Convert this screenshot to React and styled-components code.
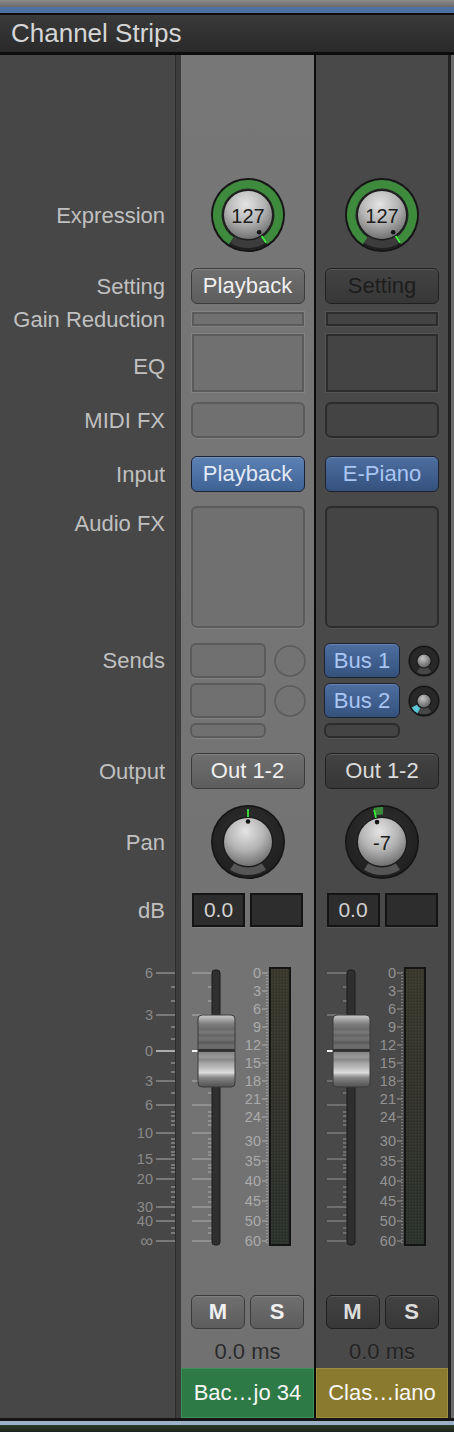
import React from 'react';
import styled, { createGlobalStyle, ThemeProvider } from 'styled-components';

const GlobalStyle = createGlobalStyle`
  html, body {
    margin: 0;
    padding: 0;
    background: #474747;
  }
  body {
    font-family: "Liberation Sans", Arial, sans-serif;
    overflow: hidden;
  }
`;

const LIGHT = {
  bg: 'linear-gradient(#777777, #717171)',
  slotFill: '#707070',
  slotBorder: '#5b5b5b',
  slotHi: '#838383',
  btnTop: '#6f6f6f',
  btnBot: '#5d5d5d',
  btnBorder: '#3b3b3b',
  btnText: '#f0f0f0',
  tick: '#9b9b9b',
  scaleText: '#ababab',
  latency: '#2a2a2a',
};

const DARK = {
  bg: '#494949',
  slotFill: '#444444',
  slotBorder: '#2c2c2c',
  slotHi: '#545454',
  btnTop: '#434343',
  btnBot: '#373737',
  btnBorder: '#202020',
  btnText: '#dcdcdc',
  tick: '#7c7c7c',
  scaleText: '#939393',
  latency: '#232323',
};

const ROWS = [
  { k: 'pad', h: 122 },
  { k: 'expr', h: 76, label: 'Expression' },
  { k: 'gap', h: 13 },
  { k: 'setting', h: 40, label: 'Setting' },
  { k: 'gain', h: 26, label: 'Gain Reduction' },
  { k: 'eq', h: 62, label: 'EQ', shift: 6 },
  { k: 'midi', h: 52, label: 'MIDI FX' },
  { k: 'input', h: 56, label: 'Input' },
  { k: 'audio', h: 130, label: 'Audio FX', top: 9 },
  { k: 'sends', h: 110, label: 'Sends', top: 16 },
  { k: 'output', h: 58, label: 'Output' },
  { k: 'pan', h: 84, label: 'Pan' },
  { k: 'db', h: 52, label: 'dB' },
  { k: 'fader', h: 348 },
  { k: 'ms', h: 56 },
  { k: 'lat', h: 28 },
  { k: 'name', h: 50 },
];

const FADER_MARKS = [['6', 37], ['3', 79], ['0', 115], ['3', 145], ['6', 169], ['10', 197], ['15', 223], ['20', 243], ['30', 271], ['40', 285], ['∞', 305]];
const FADER_MINOR = [51, 65, 91, 103, 127, 136, 157, 176, 180, 185, 189, 203, 207, 211, 216, 219, 229, 232, 236, 251, 256, 261, 266, 279, 292, 297];
const METER_MARKS = [['0', 37], ['3', 55], ['6', 73], ['9', 91], ['12', 109], ['15', 127], ['18', 145], ['21', 163], ['24', 181], ['30', 205], ['35', 225], ['40', 245], ['45', 265], ['50', 285], ['60', 305]];

const CAP_STOPS = [
  [0, '#cccccc'], [0.04, '#b4b4b4'], [0.1, '#8c8c8c'], [0.14, '#787878'], [0.2, '#6a6a6a'],
  [0.24, '#7a7a7a'], [0.28, '#646464'], [0.33, '#747474'], [0.38, '#5c5c5c'], [0.43, '#6f6f6f'],
  [0.47, '#686868'], [0.48, '#2e2e2e'], [0.505, '#2e2e2e'], [0.52, '#868686'], [0.58, '#989898'],
  [0.62, '#888888'], [0.67, '#a6a6a6'], [0.72, '#b6b6b6'], [0.76, '#c9c9c9'], [0.8, '#dcdcdc'],
  [0.83, '#b4b4b4'], [0.87, '#868686'], [0.94, '#686868'], [1, '#545454'],
];

const CHANNELS = [
  {
    id: 'a',
    tone: LIGHT,
    width: 133,
    setting: 'Playback',
    settingDim: false,
    input: 'Playback',
    inputBright: true,
    sends: null,
    pan: 0,
    panText: '',
    name: 'Bac…jo 34',
    nameBg: '#2e7a46',
    nameBorder: '#3d9058',
  },
  {
    id: 'b',
    tone: DARK,
    width: 132,
    setting: 'Setting',
    settingDim: true,
    input: 'E-Piano',
    inputBright: false,
    sends: [{ name: 'Bus 1', level: false }, { name: 'Bus 2', level: true }],
    pan: -14,
    panText: '-7',
    name: 'Clas…iano',
    nameBg: '#8a7a2d',
    nameBorder: '#9d8c3b',
  },
];

const polar = (cx, cy, r, a) => {
  const t = (a * Math.PI) / 180;
  return [cx + r * Math.sin(t), cy - r * Math.cos(t)];
};

const sector = (cx, cy, r1, r2, a1, a2) => {
  const [x1, y1] = polar(cx, cy, r2, a1);
  const [x2, y2] = polar(cx, cy, r2, a2);
  const [x3, y3] = polar(cx, cy, r1, a2);
  const [x4, y4] = polar(cx, cy, r1, a1);
  const large = a2 - a1 > 180 ? 1 : 0;
  return `M${x1} ${y1}A${r2} ${r2} 0 ${large} 1 ${x2} ${y2}L${x3} ${y3}A${r1} ${r1} 0 ${large} 0 ${x4} ${y4}Z`;
};

/* ---------- layout ---------- */

const Page = styled.div`
  width: 454px;
  height: 1432px;
  display: flex;
  flex-direction: column;
  background: #474747;
`;

const TopBar = styled.div`
  height: 7px;
  background: linear-gradient(#8c8c8c, #6a6a6a);
`;

const BlueLine = styled.div`
  height: 6px;
  background: #4d71a2;
  border-bottom: 2px solid #0e0e0e;
`;

const Header = styled.div`
  height: 37px;
  display: flex;
  align-items: center;
  padding-left: 11px;
  background: linear-gradient(#3a3a3a, #2a2a2a);
  border-bottom: 3px solid #0c0c0c;
  color: #d6d6d6;
  font-size: 26px;
`;

const Body = styled.div`
  flex: 1;
  display: flex;
`;

const LabelColumn = styled.div`
  width: 175px;
  display: flex;
  flex-direction: column;
  background: #474747;
`;

const SideDivider = styled.div`
  width: 6px;
  background: linear-gradient(90deg, #2c2c2c 0 1px, #3d3d3d 1px);
`;

const StripDivider = styled.div`
  width: 2px;
  background: #0b0b0b;
`;

const RightEdge = styled.div`
  width: 6px;
  background: linear-gradient(90deg, #232323 0 3px, #6b6b6b 3px);
`;

const Footer = styled.div`
  height: 14px;
  background: linear-gradient(#161616 0 3px, #9db1c6 3px 7px, #2c3a29 7px, #1c2619);
`;

const StripColumn = styled.div`
  width: ${({ $w }) => $w}px;
  display: flex;
  flex-direction: column;
  background: ${({ theme }) => theme.bg};
`;

const Row = styled.div`
  height: ${({ $h }) => $h}px;
  flex-shrink: 0;
  display: flex;
  justify-content: center;
  align-items: ${({ $top }) => ($top ? 'flex-start' : 'center')};
`;

const LabelRow = styled(Row)`
  justify-content: flex-end;
  padding-right: 10px;
`;

const Label = styled.div`
  font-size: 22px;
  line-height: 25px;
  color: #c0c0c0;
  white-space: nowrap;
  margin-top: ${({ $top }) => $top || 0}px;
`;

const ScaleRow = styled(Row)`
  justify-content: flex-start;
  align-items: flex-start;
`;

/* ---------- strip parts ---------- */

const Button = styled.div`
  width: 114px;
  height: 36px;
  box-sizing: border-box;
  border-radius: 6px;
  border: 1.5px solid ${({ theme }) => theme.btnBorder};
  background: linear-gradient(${({ theme }) => theme.btnTop}, ${({ theme }) => theme.btnBot});
  box-shadow: inset 0 1px 0 rgba(255, 255, 255, 0.12);
  display: flex;
  align-items: center;
  justify-content: center;
  font-size: 22px;
  color: ${({ theme, $dim }) => ($dim ? '#1d1d1d' : theme.btnText)};
`;

const BlueButton = styled.div`
  width: ${({ $w }) => $w || 114}px;
  height: ${({ $h }) => $h || 36}px;
  box-sizing: border-box;
  border-radius: 6px;
  border: 1.5px solid #1c2230;
  background: ${({ $bright }) =>
    $bright ? 'linear-gradient(#5c81b4, #3f6294)' : 'linear-gradient(#4d6ea0, #35527e)'};
  box-shadow: inset 0 1px 0 rgba(255, 255, 255, 0.15);
  display: flex;
  align-items: center;
  justify-content: center;
  font-size: 22px;
  color: ${({ $bright }) => ($bright ? '#e2e9f6' : '#a9c5f4')};
`;

const Slot = styled.div`
  width: ${({ $w }) => $w || 114}px;
  height: ${({ $h }) => $h}px;
  box-sizing: border-box;
  border-radius: 6px;
  border: 2px solid ${({ theme }) => theme.slotBorder};
  background: ${({ theme }) => theme.slotFill};
  box-shadow: 0 1px 0 ${({ theme }) => theme.slotHi};
`;

const SquareBox = styled.div`
  width: 112px;
  height: ${({ $h }) => $h}px;
  box-sizing: border-box;
  border: 2px solid ${({ theme }) => theme.slotBorder};
  background: ${({ theme }) => theme.slotFill};
  box-shadow: 0 0 0 1px ${({ theme }) => theme.slotHi};
`;

const Sends = styled.div`
  width: 116px;
  padding-top: 11px;
  display: flex;
  flex-direction: column;
  gap: 5px;
`;

const SendLine = styled.div`
  display: flex;
  align-items: center;
  justify-content: space-between;
`;

const DbPair = styled.div`
  display: flex;
  gap: 5px;
`;

const DbBox = styled.div`
  width: 53px;
  height: 34px;
  box-sizing: border-box;
  border: 2px solid #141414;
  background: #2d2d2d;
  box-shadow: 0 1px 0 rgba(255, 255, 255, 0.08);
  display: flex;
  align-items: center;
  justify-content: center;
  font-size: 21px;
  color: #d2d2d2;
`;

const MsPair = styled.div`
  display: flex;
  gap: 5px;
`;

const MsButton = styled(Button)`
  width: 54px;
  height: 34px;
  font-weight: bold;
  font-size: 22px;
`;

const Latency = styled.div`
  font-size: 22px;
  margin-top: -4px;
  color: ${({ theme }) => theme.latency};
  text-shadow: 0 1px 0 rgba(255, 255, 255, 0.1);
`;

const NameTag = styled.div`
  flex: 1;
  align-self: stretch;
  box-sizing: border-box;
  border: 1px solid ${({ $border }) => $border};
  background: ${({ $bg }) => $bg};
  display: flex;
  align-items: center;
  justify-content: center;
  font-size: 22px;
  color: #f6f6f6;
`;

/* ---------- drawings ---------- */

function Knob({ id, kind, angle, text }) {
  const c = 38;
  const [tx1, ty1] = polar(c, c, 25, angle);
  const [tx2, ty2] = polar(c, c, 33, angle);
  const [dx, dy] = polar(c, c, 20.5, angle);
  return (
    <svg width="76" height="76" viewBox="0 0 76 76">
      <defs>
        <radialGradient id={`${id}-cap`} cx="45%" cy="28%" r="78%">
          <stop offset="0" stopColor="#e4e4e4" />
          <stop offset="0.5" stopColor="#b4b4b4" />
          <stop offset="1" stopColor="#666666" />
        </radialGradient>
        <radialGradient id={`${id}-ring`} cx="50%" cy="40%" r="60%">
          <stop offset="0" stopColor="#333333" />
          <stop offset="1" stopColor="#1f1f1f" />
        </radialGradient>
      </defs>
      <circle cx={c} cy={c} r="37" fill="#141414" />
      <circle cx={c} cy={c} r="35.5" fill={`url(#${id}-ring)`} />
      <path d={sector(c, c, 24, 33, 147, 213)} fill={kind === 'expr' ? '#3c3c3c' : '#565656'} />
      {kind === 'expr' && <path d={sector(c, c, 26.5, 35, -147, 147)} fill="#3e8b3e" />}
      {kind === 'pan' && angle !== 0 && (
        <path d={sector(c, c, 27.5, 35, angle, 2)} fill="#3b8a3b" />
      )}
      <circle cx={c} cy={c} r="25.5" fill="#1c1c1c" />
      <circle cx={c} cy={c} r="24" fill={`url(#${id}-cap)`} />
      <line x1={tx1} y1={ty1} x2={tx2} y2={ty2} stroke="#3cff3c" strokeWidth="1.6" />
      <circle cx={dx} cy={dy} r="2.3" fill="#141414" />
      {text && (
        <text
          x={c}
          y={c + 1}
          textAnchor="middle"
          dominantBaseline="central"
          fontFamily="Liberation Sans, Arial, sans-serif"
          fontSize="20"
          fill="#1c1c1c"
        >
          {text}
        </text>
      )}
    </svg>
  );
}

function SendKnob({ id, level }) {
  const c = 16;
  return (
    <svg width="32" height="32" viewBox="0 0 32 32">
      <defs>
        <radialGradient id={`${id}-ball`} cx="40%" cy="30%" r="75%">
          <stop offset="0" stopColor="#c4c4c4" />
          <stop offset="1" stopColor="#5e5e5e" />
        </radialGradient>
      </defs>
      <circle cx={c} cy={c} r="15.5" fill="#151515" />
      <circle cx={c} cy={c} r="14" fill="#282828" />
      <path d={sector(c, c, 6, 13, 147, 213)} fill="#474747" />
      {level && <path d={sector(c, c, 8, 14, -152, -118)} fill="#5ac8d8" />}
      <circle cx={c} cy={c} r="7.5" fill="#1a1a1a" />
      <circle cx={c} cy={c} r="6.5" fill={`url(#${id}-ball)`} />
    </svg>
  );
}

function EmptySend() {
  return (
    <svg width="32" height="32" viewBox="0 0 32 32">
      <circle cx="16" cy="16" r="15" fill="#737373" stroke="#5c5c5c" strokeWidth="1.6" />
    </svg>
  );
}

function FaderLegend() {
  const col = '#8a8a8a';
  return (
    <svg width="175" height="348" viewBox="0 0 175 348">
      {FADER_MARKS.map(([n, y], i) => (
        <g key={i}>
          <text
            x="153"
            y={y}
            textAnchor="end"
            dominantBaseline="central"
            fontFamily="Liberation Sans, Arial, sans-serif"
            fontSize={n === '∞' ? 18 : 14.5}
            fill={col}
          >
            {n}
          </text>
          <line x1="156" x2="175" y1={y} y2={y} stroke={n === '0' && i === 2 ? '#cfcfcf' : col} strokeWidth="1.5" />
        </g>
      ))}
      {FADER_MINOR.map((y) => (
        <line key={y} x1="171" x2="175" y1={y} y2={y} stroke={col} strokeWidth="1.5" />
      ))}
    </svg>
  );
}

function Fader({ id, width, t }) {
  const dots = [];
  for (let y = 36; y <= 306; y += 3) dots.push(y);
  return (
    <svg width={width} height="348" viewBox={`0 0 ${width} 348`}>
      <defs>
        <linearGradient id={`${id}-cap`} x1="0" y1="0" x2="0" y2="1">
          {CAP_STOPS.map(([o, c]) => (
            <stop key={o} offset={o} stopColor={c} />
          ))}
        </linearGradient>
        <linearGradient id={`${id}-meter`} x1="0" y1="0" x2="0" y2="1">
          <stop offset="0" stopColor="#38372a" />
          <stop offset="0.45" stopColor="#313129" />
          <stop offset="1" stopColor="#2a302b" />
        </linearGradient>
        <pattern id={`${id}-dots`} width="3" height="3" patternUnits="userSpaceOnUse">
          <rect width="1.5" height="1.5" fill="rgba(255,255,255,0.06)" />
        </pattern>
      </defs>
      {FADER_MARKS.map(([, y], i) => (
        <line key={i} x1="11" x2="31" y1={y} y2={y} stroke={t.tick} strokeWidth="1.5" />
      ))}
      {FADER_MINOR.map((y) => (
        <line key={y} x1="27" x2="31" y1={y} y2={y} stroke={t.tick} strokeWidth="1.5" />
      ))}
      <rect x="31" y="34" width="8" height="275" rx="3" fill="#2f2f2f" stroke="#1c1c1c" />
      {METER_MARKS.map(([n, y]) => (
        <g key={n}>
          <text
            x="80"
            y={y}
            textAnchor="end"
            dominantBaseline="central"
            fontFamily="Liberation Sans, Arial, sans-serif"
            fontSize="14.5"
            fill={t.scaleText}
          >
            {n}
          </text>
          <line x1="81" x2="86" y1={y} y2={y} stroke={t.tick} strokeWidth="1.5" />
        </g>
      ))}
      {dots.map((y) => (
        <rect key={y} x="85" y={y} width="2" height="1.2" fill={t.tick} />
      ))}
      <rect x="89" y="32" width="20" height="277" fill={`url(#${id}-meter)`} stroke="#141414" strokeWidth="2" />
      <rect x="90" y="33" width="18" height="275" fill={`url(#${id}-dots)`} />
      <rect x="11" y="114" width="6" height="2" fill="#f4f4f4" />
      <rect x="17" y="79" width="37" height="72" rx="4" fill={`url(#${id}-cap)`} stroke="#3a3a3a" />
    </svg>
  );
}

/* ---------- strip ---------- */

function StripCell({ row, ch }) {
  switch (row.k) {
    case 'expr':
      return <Knob id={`${ch.id}-expr`} kind="expr" angle={147} text="127" />;
    case 'setting':
      return <Button $dim={ch.settingDim}>{ch.setting}</Button>;
    case 'gain':
      return <SquareBox $h={14} />;
    case 'eq':
      return <SquareBox $h={58} />;
    case 'midi':
      return <Slot $h={36} />;
    case 'input':
      return <BlueButton $bright={ch.inputBright}>{ch.input}</BlueButton>;
    case 'audio':
      return <Slot $h={122} />;
    case 'sends':
      return (
        <Sends>
          {ch.sends
            ? ch.sends.map((s, i) => (
                <SendLine key={s.name}>
                  <BlueButton $w={76} $h={35}>{s.name}</BlueButton>
                  <SendKnob id={`${ch.id}-send${i}`} level={s.level} />
                </SendLine>
              ))
            : [0, 1].map((i) => (
                <SendLine key={i}>
                  <Slot $w={76} $h={35} />
                  <EmptySend />
                </SendLine>
              ))}
          <Slot $w={76} $h={15} />
        </Sends>
      );
    case 'output':
      return <Button>Out 1-2</Button>;
    case 'pan':
      return <Knob id={`${ch.id}-pan`} kind="pan" angle={ch.pan} text={ch.panText} />;
    case 'db':
      return (
        <DbPair>
          <DbBox>0.0</DbBox>
          <DbBox />
        </DbPair>
      );
    case 'fader':
      return <Fader id={`${ch.id}-fader`} width={ch.width} t={ch.tone} />;
    case 'ms':
      return (
        <MsPair>
          <MsButton>M</MsButton>
          <MsButton>S</MsButton>
        </MsPair>
      );
    case 'lat':
      return <Latency>0.0 ms</Latency>;
    case 'name':
      return (
        <NameTag $bg={ch.nameBg} $border={ch.nameBorder}>
          {ch.name}
        </NameTag>
      );
    default:
      return null;
  }
}

function Strip({ ch }) {
  return (
    <ThemeProvider theme={ch.tone}>
      <StripColumn $w={ch.width}>
        {ROWS.map((row) => (
          <Row key={row.k} $h={row.h} $top={row.k === 'sends' || row.k === 'fader'}>
            <StripCell row={row} ch={ch} />
          </Row>
        ))}
      </StripColumn>
    </ThemeProvider>
  );
}

export default function App() {
  return (
    <>
      <GlobalStyle />
      <Page>
        <TopBar />
        <BlueLine />
        <Header>Channel Strips</Header>
        <Body>
          <LabelColumn>
            {ROWS.map((row) =>
              row.k === 'fader' ? (
                <ScaleRow key={row.k} $h={row.h}>
                  <FaderLegend />
                </ScaleRow>
              ) : (
                <LabelRow key={row.k} $h={row.h} $top={row.top}>
                  {row.label && <Label $top={row.top || row.shift}>{row.label}</Label>}
                </LabelRow>
              )
            )}
          </LabelColumn>
          <SideDivider />
          <Strip ch={CHANNELS[0]} />
          <StripDivider />
          <Strip ch={CHANNELS[1]} />
          <RightEdge />
        </Body>
        <Footer />
      </Page>
    </>
  );
}
